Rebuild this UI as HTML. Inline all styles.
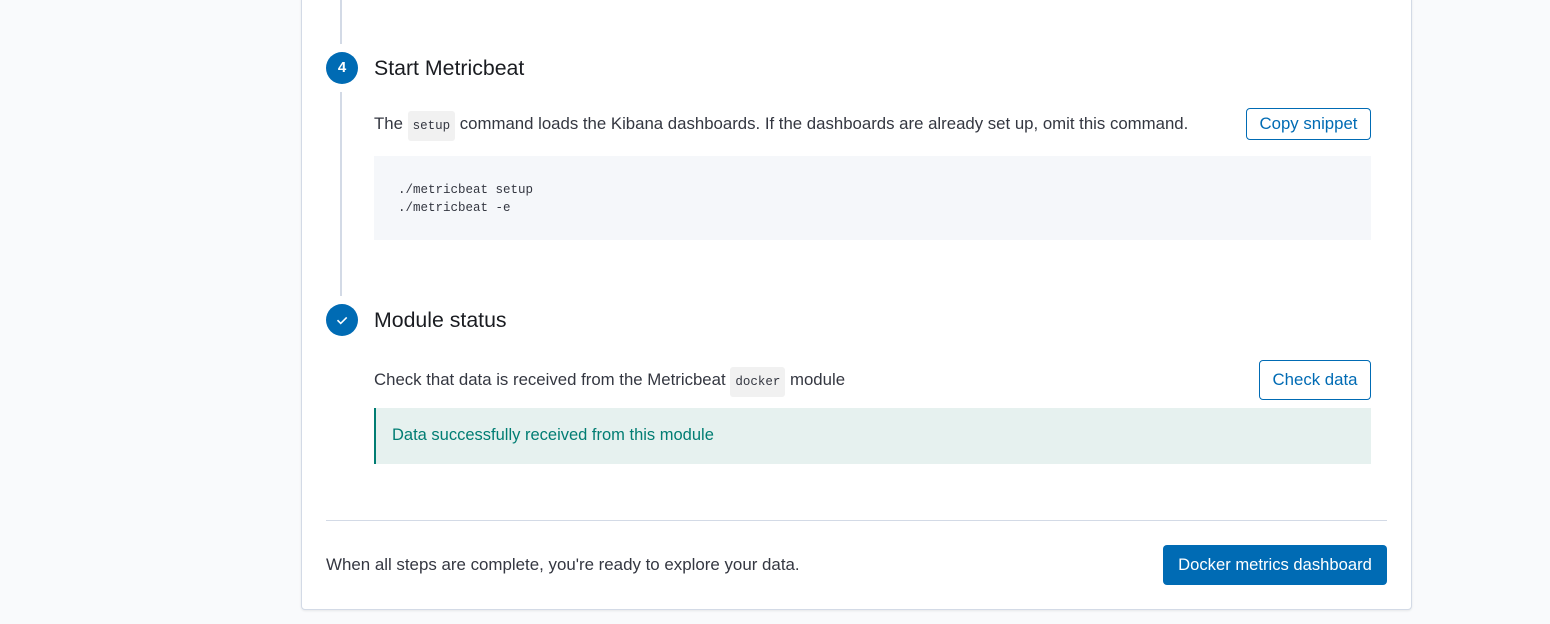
<!DOCTYPE html>
<html><head><style>
body{margin:0;width:1550px;height:624px;background:#f9fafc;font-family:"Liberation Sans",sans-serif;position:relative;overflow:hidden;color:#343741}
.panel{position:absolute;left:301px;top:-5px;width:1109px;height:613px;background:#fff;border:1px solid #d3dae6;border-radius:4px;box-shadow:0 1px 2px rgba(0,0,0,.08)}
.a{position:absolute}
.line{position:absolute;left:340px;width:2px;background:#d3dae6}
.circ{position:absolute;width:32px;height:32px;border-radius:50%;background:#006bb4;color:#fff;font-weight:bold;font-size:15px;text-align:center;line-height:32px}
.title{position:absolute;left:374px;font-size:21.3px;color:#1a1c21}
.txt{position:absolute;left:374px;font-size:16.8px}
code{font-family:"Liberation Mono",monospace;font-size:12.5px;background:#f1f1f1;border-radius:3px;padding:8px 5px;color:#343741}
.btn{position:absolute;border:1px solid #006bb4;border-radius:4px;color:#006bb4;font-size:16.8px;text-align:center;box-sizing:border-box;background:#fff;white-space:nowrap}
</style></head><body>
<div class="panel"></div>
<div class="line" style="top:0;height:44px"></div>
<div class="line" style="top:92px;height:204px"></div>
<div class="circ" style="left:326px;top:52px">4</div>
<div class="title" style="top:56px">Start Metricbeat</div>
<div class="txt" style="top:114px">The <code>setup</code> command loads the Kibana dashboards. If the dashboards are already set up, omit this command.</div>
<div class="btn" style="left:1246px;top:108px;width:125px;height:32px;line-height:30px">Copy snippet</div>
<div class="a" style="left:374px;top:156px;width:997px;height:84px;background:#f5f7fa"></div>
<div class="a" style="left:398px;top:181px;font-family:'Liberation Mono',monospace;font-size:12.5px;line-height:18px;color:#343741">./metricbeat setup<br>./metricbeat -e</div>
<div class="circ" style="left:326px;top:304px"><svg width="32" height="32" viewBox="0 0 32 32"><path d="M11.5 16.2l3.2 3.2 6-6" fill="none" stroke="#fff" stroke-width="1.6"/></svg></div>
<div class="title" style="top:308px">Module status</div>
<div class="txt" style="top:370px">Check that data is received from the Metricbeat <code>docker</code> module</div>
<div class="btn" style="left:1259px;top:360px;width:112px;height:40px;line-height:38px">Check data</div>
<div class="a" style="left:374px;top:408px;width:997px;height:56px;background:#e6f1ef;border-left:2px solid #017d73;box-sizing:border-box"></div>
<div class="a" style="left:392px;top:426px;font-size:16.5px;color:#017d73">Data successfully received from this module</div>
<div class="a" style="left:326px;top:520px;width:1061px;height:1px;background:#d3dae6"></div>
<div class="a" style="left:326px;top:555px;font-size:16.9px">When all steps are complete, you're ready to explore your data.</div>
<div class="btn" style="left:1163px;top:545px;width:224px;height:40px;line-height:40px;background:#006bb4;color:#fff;border:none;font-size:16.6px">Docker metrics dashboard</div>
</body></html>
